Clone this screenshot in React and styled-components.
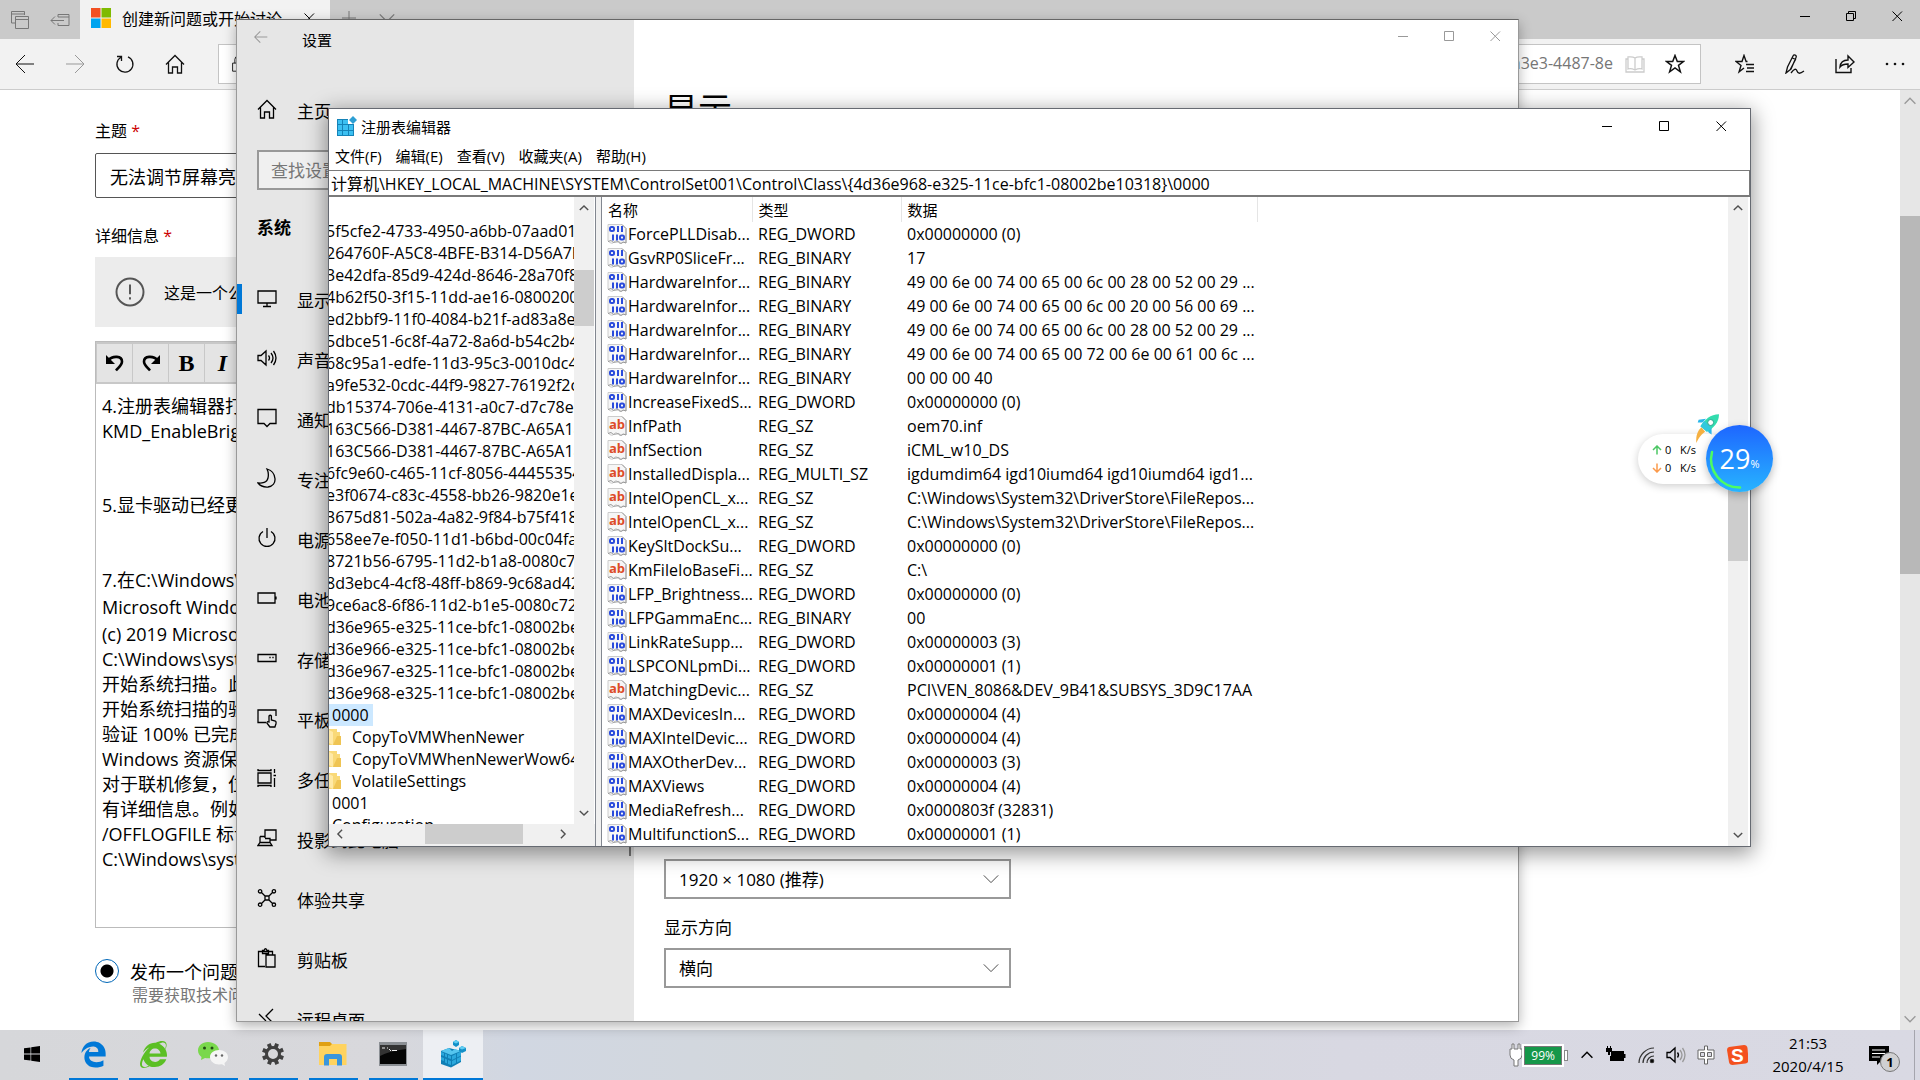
import React, { useState } from 'react'
import styled, { createGlobalStyle, css } from 'styled-components'
import { FaEdgeLegacy, FaInternetExplorer } from 'react-icons/fa'

const GlobalStyle = createGlobalStyle`
  * {
    box-sizing: border-box;
  }

  body {
    margin: 0;
    overflow: hidden;
    font-family: 'Open Sans', 'Noto Sans CJK SC', sans-serif;
    font-size: 16px;
    color: #000;
  }

  button,
  input,
  select {
    font: inherit;
    color: inherit;
    margin: 0;
    padding: 0;
    border: 0;
    background: none;
  }

  svg {
    display: block;
    flex: none;
  }
`

/* ---------- data ---------- */

const values = [
  ['ForcePLLDisab...', 'REG_DWORD', '0x00000000 (0)'],
  ['GsvRP0SliceFr...', 'REG_BINARY', '17'],
  ['HardwareInfor...', 'REG_BINARY', '49 00 6e 00 74 00 65 00 6c 00 28 00 52 00 29 ...'],
  ['HardwareInfor...', 'REG_BINARY', '49 00 6e 00 74 00 65 00 6c 00 20 00 56 00 69 ...'],
  ['HardwareInfor...', 'REG_BINARY', '49 00 6e 00 74 00 65 00 6c 00 28 00 52 00 29 ...'],
  ['HardwareInfor...', 'REG_BINARY', '49 00 6e 00 74 00 65 00 72 00 6e 00 61 00 6c ...'],
  ['HardwareInfor...', 'REG_BINARY', '00 00 00 40'],
  ['IncreaseFixedS...', 'REG_DWORD', '0x00000000 (0)'],
  ['InfPath', 'REG_SZ', 'oem70.inf'],
  ['InfSection', 'REG_SZ', 'iCML_w10_DS'],
  ['InstalledDispla...', 'REG_MULTI_SZ', 'igdumdim64 igd10iumd64 igd10iumd64 igd1...'],
  ['IntelOpenCL_x...', 'REG_SZ', 'C:\\Windows\\System32\\DriverStore\\FileRepos...'],
  ['IntelOpenCL_x...', 'REG_SZ', 'C:\\Windows\\System32\\DriverStore\\FileRepos...'],
  ['KeySltDockSu...', 'REG_DWORD', '0x00000000 (0)'],
  ['KmFileIoBaseFi...', 'REG_SZ', 'C:\\'],
  ['LFP_Brightness...', 'REG_DWORD', '0x00000000 (0)'],
  ['LFPGammaEnc...', 'REG_BINARY', '00'],
  ['LinkRateSupp...', 'REG_DWORD', '0x00000003 (3)'],
  ['LSPCONLpmDi...', 'REG_DWORD', '0x00000001 (1)'],
  ['MatchingDevic...', 'REG_SZ', 'PCI\\VEN_8086&DEV_9B41&SUBSYS_3D9C17AA'],
  ['MAXDevicesIn...', 'REG_DWORD', '0x00000004 (4)'],
  ['MAXIntelDevic...', 'REG_DWORD', '0x00000004 (4)'],
  ['MAXOtherDev...', 'REG_DWORD', '0x00000003 (3)'],
  ['MAXViews', 'REG_DWORD', '0x00000004 (4)'],
  ['MediaRefresh...', 'REG_DWORD', '0x0000803f (32831)'],
  ['MultifunctionS...', 'REG_DWORD', '0x00000001 (1)'],
]

const classKeys = [
  '5f5cfe2-4733-4950-a6bb-07aad01a',
  '264760F-A5C8-4BFE-B314-D56A7B',
  '3e42dfa-85d9-424d-8646-28a70f86',
  '4b62f50-3f15-11dd-ae16-0800200c',
  'ed2bbf9-11f0-4084-b21f-ad83a8e6',
  '5dbce51-6c8f-4a72-8a6d-b54c2b4f',
  '68c95a1-edfe-11d3-95c3-0010dc40',
  'a9fe532-0cdc-44f9-9827-76192f2c',
  'db15374-706e-4131-a0c7-d7c78eb0',
  '163C566-D381-4467-87BC-A65A18',
  '163C566-D381-4467-87BC-A65A18',
  '6fc9e60-c465-11cf-8056-44455354',
  'e3f0674-c83c-4558-bb26-9820e1eb',
  '3675d81-502a-4a82-9f84-b75f418c',
  '658ee7e-f050-11d1-b6bd-00c04fa3',
  '8721b56-6795-11d2-b1a8-0080c72e',
  '8d3ebc4-4cf8-48ff-b869-9c68ad42',
  '9ce6ac8-6f86-11d2-b1e5-0080c72e',
  'd36e965-e325-11ce-bfc1-08002be',
  'd36e966-e325-11ce-bfc1-08002be',
  'd36e967-e325-11ce-bfc1-08002be',
  'd36e968-e325-11ce-bfc1-08002be',
]

const subKeys = ['CopyToVMWhenNewer', 'CopyToVMWhenNewerWow64', 'VolatileSettings']

const menus = ['文件(F)', '编辑(E)', '查看(V)', '收藏夹(A)', '帮助(H)']

/* ---------- shared ---------- */

const Ico = ({ size = 20, w = 1, children, ...rest }) => (
  <svg
    width={size}
    height={size}
    viewBox='0 0 20 20'
    fill='none'
    stroke='currentColor'
    strokeWidth={w}
    {...rest}
  >
    {children}
  </svg>
)

const Chevron = ({ dir = 'down', size = 16, w = 1 }) => {
  const d = {
    down: 'M4 7l6 6 6-6',
    up: 'M4 13l6-6 6 6',
    left: 'M13 4l-6 6 6 6',
    right: 'M7 4l6 6-6 6',
  }[dir]
  return (
    <Ico size={size} w={w}>
      <path d={d} />
    </Ico>
  )
}

const CaptionIcon = ({ kind }) => (
  <svg width='11' height='11' viewBox='0 0 11 11' fill='none' stroke='currentColor'>
    {kind === 'min' && <path d='M0 5.500h10' />}
    {kind === 'max' && <path d='M.5.5h9v9h-9z' />}
    {kind === 'restore' && <path d='M.5 2.500h7v7h-7zM2.500 2.500v-2h7v7h-2' />}
    {kind === 'close' && <path d='M.5.5l9.500 9.500M10 .5L.5 10' />}
  </svg>
)

const CaptionBtn = styled.button`
  width: ${(p) => p.$w}px;
  height: 32px;
  display: grid;
  place-items: center;
`

const Captions = styled.div`
  margin-left: auto;
  display: flex;
  color: ${(p) => p.$color || '#000'};
`

const Caption = ({ w, color, mid = 'max' }) => (
  <Captions $color={color}>
    <CaptionBtn $w={w} aria-label='最小化'>
      <CaptionIcon kind='min' />
    </CaptionBtn>
    <CaptionBtn $w={w} aria-label='最大化'>
      <CaptionIcon kind={mid} />
    </CaptionBtn>
    <CaptionBtn $w={w} aria-label='关闭'>
      <CaptionIcon kind='close' />
    </CaptionBtn>
  </Captions>
)

const Bar = styled.div`
  display: flex;
  flex-direction: ${(p) => (p.$row ? 'row' : 'column')};
  flex: none;
  ${(p) => (p.$row ? 'height' : 'width')}: 20px;
  background: ${(p) => p.$track || '#f0f0f0'};
  color: ${(p) => p.$arrow || '#505050'};
`

const BarBtn = styled.button`
  flex: 0 0 22px;
  display: grid;
  place-items: center;
`

const Part = styled.div`
  flex: ${(p) => p.$grow} 1 0;
  background: ${(p) => p.$color || 'transparent'};
`

const ScrollBar = ({ row, parts, thumb = '#cdcdcd', w = 2, size = 14, ...rest }) => (
  <Bar $row={row} {...rest}>
    <BarBtn aria-label={row ? '向左' : '向上'}>
      <Chevron dir={row ? 'left' : 'up'} w={w} size={size} />
    </BarBtn>
    <Part $grow={parts[0]} />
    <Part $grow={parts[1]} $color={thumb} />
    <Part $grow={parts[2]} />
    <BarBtn aria-label={row ? '向右' : '向下'}>
      <Chevron dir={row ? 'right' : 'down'} w={w} size={size} />
    </BarBtn>
  </Bar>
)

/* ---------- browser ---------- */

const Desktop = styled.div`
  height: 100vh;
  position: relative;
  display: flex;
  flex-direction: column;
  overflow: hidden;
  white-space: nowrap;
`

const Browser = styled.main`
  flex: 1;
  min-height: 0;
  display: flex;
  flex-direction: column;
  background: #fff;
`

const TabStrip = styled.div`
  height: 39px;
  display: flex;
  background: #cacaca;
  color: #777;
`

const TabTools = styled.div`
  width: 80px;
  display: flex;
  align-items: center;
  justify-content: space-between;
  padding: 0 10px;
`

const Tab = styled.div`
  width: 250px;
  height: 39px;
  display: flex;
  align-items: center;
  gap: 11px;
  padding: 0 15px 3px 11px;
  background: #f2f2f2;
  color: #000;

  button {
    margin-left: auto;
  }
`

const StripBtn = styled.button`
  width: 38px;
  height: 36px;
  display: grid;
  place-items: center;
`

const NavBar = styled.div`
  height: 51px;
  display: flex;
  align-items: center;
  background: #f2f2f2;
  border-bottom: 1px solid #ccc;
`

const NavBtn = styled.button`
  width: 50px;
  height: 48px;
  display: grid;
  place-items: center;
  color: ${(p) => (p.$off ? '#999' : '#111')};
`

const AddressBox = styled.div`
  flex: 1;
  height: 40px;
  margin: 0 19px 0 18px;
  padding: 0 15px 0 10px;
  display: flex;
  align-items: center;
  gap: 20px;
  background: #fff;
  border: 1px solid #c4c4c4;
  color: #111;

  input {
    flex: 1;
    margin-right: -8px;
    padding-bottom: 2px;
    text-align: right;
    color: #767676;
    outline: none;
  }
`

const Page = styled.div`
  flex: 1;
  min-height: 0;
  display: flex;
  justify-content: space-between;
`

const Form = styled.form`
  width: 60%;
  padding: 30px 0 0 95px;
  overflow: hidden;
`

const FieldLabel = styled.label`
  display: block;
  line-height: 22px;

  span {
    color: #c00;
  }
`

const Subject = styled.input`
  display: block;
  width: 100%;
  height: 45px;
  margin: 11px 0 27px;
  padding: 0 14px;
  border: 1px solid #555;
  border-radius: 2px;
  font-size: 18px;
`

const Notice = styled.div`
  height: 70px;
  margin: 10px 0 14px;
  padding: 0 20px;
  display: flex;
  align-items: center;
  gap: 19px;
  background: #ececec;
`

const Editor = styled.div`
  height: 587px;
  border: 1px solid #bbb;
`

const EditorTools = styled.div`
  display: flex;
  gap: 1px;
  height: 42px;
  padding: 2px 0 2px 1px;
  background: #c8c8c8;
`

const EditorBtn = styled.button`
  width: 35px;
  display: grid;
  place-items: center;
  background: #e4e4e4;
  font: bold 24px 'Liberation Serif', serif;
  font-style: ${(p) => (p.$italic ? 'italic' : 'normal')};
`

const EditorFill = styled.div`
  flex: 1;
  background: #e4e4e4;
`

const EditorText = styled.div`
  padding: 10px 6px;
  font-size: 18px;
  line-height: 25px;
  outline: none;

  p {
    margin: 0;
  }
`

const Gap = styled.div`
  height: ${(p) => p.$h}px;
`

const RadioRow = styled.label`
  display: grid;
  grid-template-columns: 24px 1fr;
  column-gap: 11px;
  align-items: center;
  margin-top: 30px;
  font-size: 18px;

  input {
    appearance: none;
    width: 24px;
    height: 24px;
    border: 1px solid #0067b8;
    border-radius: 50%;
    background: radial-gradient(circle, #000 6px, transparent 7px);
  }

  small {
    grid-column: 2;
    padding-left: 2px;
    font-size: 16px;
    line-height: 22px;
    color: #777;
  }
`

const homePath = 'M1 10.500L10 1.500l9 9M3.500 8.500v10.500h4v-6h5v6h4V8.500'

const Browse = () => {
  const [subject, setSubject] = useState('无法调节屏幕亮度')
  return (
    <Browser>
      <TabStrip>
        <TabTools>
          <Ico>
            <path d='M5 13H1.500V1.500h13V5M1.500 4h13M5.500 6.500h13v12h-13zM5.500 9.500h13' />
          </Ico>
          <Ico>
            <path d='M8 7V4.500h11v11H8V13M8 7h11M14 10.500H1M5 6.500l-4 4 4 4' />
          </Ico>
        </TabTools>
        <Tab>
          <svg width='20' height='20' viewBox='0 0 20 20'>
            <path fill='#f25022' d='M0 0h9.500v9.500H0z' />
            <path fill='#7fba00' d='M10.500 0H20v9.500h-9.500z' />
            <path fill='#00a4ef' d='M0 10.500h9.500V20H0z' />
            <path fill='#ffb900' d='M10.500 10.500H20V20h-9.500z' />
          </svg>
          创建新问题或开始讨论
          <button aria-label='关闭标签页'>
            <CaptionIcon kind='close' />
          </button>
        </Tab>
        <StripBtn aria-label='新建标签页'>
          <Ico>
            <path d='M10 3v14M3 10h14' />
          </Ico>
        </StripBtn>
        <StripBtn aria-label='标签页预览'>
          <Chevron size={24} />
        </StripBtn>
        <Caption w={46} mid='restore' />
      </TabStrip>
      <NavBar>
        <NavBtn aria-label='返回'>
          <Ico>
            <path d='M19 10H1M10 1l-9 9 9 9' />
          </Ico>
        </NavBtn>
        <NavBtn $off aria-label='前进'>
          <Ico>
            <path d='M1 10h18M10 1l9 9-9 9' />
          </Ico>
        </NavBtn>
        <NavBtn aria-label='刷新'>
          <Ico w={1.3}>
            <path d='M6 3.200a8 8 0 1 0 7 -.4M2 2.500h4.500V7' />
          </Ico>
        </NavBtn>
        <NavBtn aria-label='主页'>
          <Ico w={1.3}>
            <path d={homePath} />
          </Ico>
        </NavBtn>
        <AddressBox>
          <Ico size={18}>
            <path d='M4 9h12v9H4zM6.500 9V5a3.500 3.500 0 0 1 7 0v4' />
          </Ico>
          <input aria-label='地址' defaultValue='a3e3-4487-8e' />
          <Ico stroke='#ccc' w={1.3}>
            <path d='M10 4C7 2 4 3 3 3v12c3-1 5 0 7 1 2-1 4-2 7-1V3c-1 0-4-1-7 1zv12M3 5H1v13h18V5h-2' />
          </Ico>
          <Ico w={1.5}>
            <path d='M10 1.500l2.300 6h6.200l-5 3.900 1.900 6.400-5.400-3.900-5.400 3.900 1.900-6.400-5-3.900h6.200z' />
          </Ico>
        </AddressBox>
        <NavBtn aria-label='收藏夹'>
          <Ico w={1.4}>
            <path d='M12.500 7.500h-1.400L9 1.500l-2 6H1l5 3.900-1.900 6.400L9 14M11 10.500h8M12 14h7M11 17.500h8' />
          </Ico>
        </NavBtn>
        <NavBtn aria-label='添加备注'>
          <Ico w={1.3}>
            <path d='M1 19l1.500-6L8 2c1-2 4-1 3 1.500L6 15zM7.500 4l3 1.500L5 16M6 19c3-4 5-5 6-2s3 3 7 0' />
          </Ico>
        </NavBtn>
        <NavBtn aria-label='共享'>
          <Ico w={1.4}>
            <path d='M1 5v13.500h15V14M5 13c.5-5 4-7 8-7V2l6 6-6 5.500V10c-4 0-6 .5-8 3z' />
          </Ico>
        </NavBtn>
        <NavBtn aria-label='更多'>
          <Ico fill='currentColor' stroke='none'>
            <circle cx='2' cy='10' r='1.300' />
            <circle cx='10' cy='10' r='1.300' />
            <circle cx='18' cy='10' r='1.300' />
          </Ico>
        </NavBtn>
      </NavBar>
      <Page>
        <Form>
          <FieldLabel htmlFor='subject'>
            主题 <span>*</span>
          </FieldLabel>
          <Subject id='subject' value={subject} onChange={(e) => setSubject(e.target.value)} />
          <FieldLabel as='div'>
            详细信息 <span>*</span>
          </FieldLabel>
          <Notice>
            <Ico size={30} stroke='#555' w={1.3}>
              <circle cx='10' cy='10' r='9' />
              <path d='M10 5v6.500M10 13.500v1.500' />
            </Ico>
            这是一个公共社区
          </Notice>
          <Editor>
            <EditorTools>
              <EditorBtn type='button' aria-label='撤消'>
                <Ico w={2.6}>
                  <path d='M3 7.500C8 2 17 3 17 8.500c0 3.500-3 5.500-6 9' />
                  <path d='M1 2v9h9z' fill='currentColor' stroke='none' />
                </Ico>
              </EditorBtn>
              <EditorBtn type='button' aria-label='恢复'>
                <Ico w={2.6}>
                  <path d='M17 7.500C12 2 3 3 3 8.500c0 3.500 3 5.500 6 9' />
                  <path d='M19 2v9h-9z' fill='currentColor' stroke='none' />
                </Ico>
              </EditorBtn>
              <EditorBtn type='button'>B</EditorBtn>
              <EditorBtn type='button' $italic>
                I
              </EditorBtn>
              <EditorFill />
            </EditorTools>
            <EditorText role='textbox' aria-label='详细信息' tabIndex={0}>
              <p>4.注册表编辑器打开</p>
              <p>KMD_EnableBrightness</p>
              <Gap $h={49} />
              <p>5.显卡驱动已经更新</p>
              <Gap $h={50} />
              <p>7.在C:\Windows\system32</p>
              <Gap $h={2} />
              <p>Microsoft Windows</p>
              <Gap $h={2} />
              <p>(c) 2019 Microsoft</p>
              <p>C:\Windows\system32</p>
              <p>开始系统扫描。此过程</p>
              <p>开始系统扫描的验证</p>
              <p>验证 100% 已完成</p>
              <p>Windows 资源保护</p>
              <p>对于联机修复，位于</p>
              <p>有详细信息。例如</p>
              <p>/OFFLOGFILE 标记</p>
              <p>C:\Windows\system32</p>
            </EditorText>
          </Editor>
          <RadioRow>
            <input type='radio' name='kind' defaultChecked />
            发布一个问题
            <small>需要获取技术问题</small>
          </RadioRow>
        </Form>
        <ScrollBar parts={[104, 358, 434]} $track='#e6e6e6' $arrow='#999' thumb='#b8b8b8' w={1.5} size={18} />
      </Page>
    </Browser>
  )
}

/* ---------- settings ---------- */

const windowBase = css`
  position: absolute;
  display: flex;
  background: #fff;
`

const SettingsWindow = styled.section`
  ${windowBase}
  left: 236px;
  top: 19px;
  right: 401px;
  bottom: 58px;
  border: 1px solid #999;
  border-top-color: #666;
  box-shadow: 0 4px 12px rgba(0, 0, 0, 0.3);
`

const SettingsNav = styled.nav`
  width: 397px;
  display: flex;
  flex-direction: column;
  overflow: hidden;
  background: #e6e6e6;
  font-size: 17px;
`

const SettingsTitle = styled.header`
  display: flex;
  align-items: center;
  gap: 34px;
  height: 38px;
  padding-left: 17px;
  font-size: 15px;

  button {
    height: 22px;
    padding-bottom: 4px;
    color: #999;
  }
`

const NavItem = styled.a`
  flex: none;
  display: flex;
  align-items: center;
  gap: 20px;
  height: 60px;
  padding-left: 20px;
  background: ${(p) => (p.$on ? 'linear-gradient(#0078d7, #0078d7) no-repeat left center / 5px 30px' : 'none')};
  color: #000;
  text-decoration: none;

  svg {
    margin-bottom: 3px;
  }
`

const HomeItem = styled(NavItem)`
  margin-top: 22px;
`

const Search = styled.input`
  height: 40px;
  margin: 10px 20px 0;
  padding: 0 12px;
  border: 2px solid #999;
  background: #f0f0f0;

  &::placeholder {
    color: #777;
  }
`

const NavGroup = styled.h2`
  margin: 25px 20px 29px;
  font-size: 17px;
  line-height: 25px;
`

const NavList = styled.div`
  flex: 1;
  min-height: 0;
  display: flex;
  overflow: hidden;
`

const NavItems = styled.div`
  flex: 1;
  display: flex;
  flex-direction: column;
`

const NavThumb = styled.div`
  width: 2px;
  height: 78%;
  margin-right: 3px;
  background: #777;
`

const SettingsPane = styled.div`
  flex: 1;
  display: flex;
  flex-direction: column;
  padding: 0 0 33px 30px;
  font-size: 17px;

  h1 {
    margin: 25px 0 auto;
    font-size: 34px;
    line-height: 48px;
    font-weight: 400;
  }

  label {
    margin: 16px 0 8px;
    line-height: 25px;
  }
`

const SelectBox = styled.div`
  display: grid;
  align-items: center;
  width: 347px;
  height: 40px;
  border: 2px solid #999;
  color: #444;

  select,
  svg {
    grid-area: 1 / 1;
  }

  select {
    height: 36px;
    padding: 0 13px;
    appearance: none;
    outline: none;
    color: #000;
  }

  svg {
    justify-self: end;
    margin-right: 6px;
    pointer-events: none;
  }
`

const PaneCaption = styled.div`
  display: flex;
  height: 40px;
`

const navItems = [
  ['显示', 'M1 3h18v12H1zM10 15v3M6 18.500h8'],
  ['声音', 'M1 7.500h3L9 3v14l-5-4.500H1zM11.500 7.500q2 2.500 0 5M14 5q4 5 0 10M16.500 3q5 7 0 14'],
  ['通知和操作', 'M1 1.500h18v14h-6l-3 3-3-3H1z'],
  ['专注助手', 'M10 1c10 3 11 17 1 18-4 .3-8-1.500-10-4 4 .5 9-.5 10-5s0-7-1-9z'],
  ['电源和睡眠', 'M10 0v10M6 3.500a8 8 0 1 0 8 0'],
  ['电池', 'M1 5h17v10H1zM19 8.500v3'],
  ['存储', 'M1 6.500h18v7H1zM13 8.700v1.500M16 8.700v1.500'],
  ['平板电脑', 'M9 14.500H1V2h18v6M12 14V8q1.200-1.500 2.400 0v4l4 1q1 .5.500 3l-1 3h-5l-3-4q0-2 2-1z'],
  ['多任务处理', 'M1 5h13v10H1zM1 1v1.500h13V1M1 19v-1.500h13V19M17.500 1v4M17.500 10v9M16.500 7.500h2.500'],
  ['投影到此电脑', 'M8 10V2h11v10h-6M3 8.500h5M3 8.500v6h10v-4H8M1 17.500h14l-2-3H3z'],
  ['体验共享', 'M8 8h4v4H8zM4.500 4.500L8 8M15.500 4.500L12 8M4.500 15.500L8 12M15.500 15.500L12 12M4.800 3.300a1.700 1.700 0 1 1-3.400 0 1.700 1.700 0 1 1 3.400 0M18.600 3.300a1.700 1.700 0 1 1-3.400 0 1.700 1.700 0 1 1 3.400 0M4.800 16.700a1.700 1.700 0 1 1-3.400 0 1.700 1.700 0 1 1 3.400 0M18.600 16.700a1.700 1.700 0 1 1-3.400 0 1.700 1.700 0 1 1 3.400 0'],
  ['剪贴板', 'M8 18.500H1.500V3.500h14V7M5.500 5.500V2.500H7Q8.500-1 10 2.500h1.500v3zM9 7h9v12H9z'],
  ['远程桌面', 'M16 1l-7 7 7 7M2 6l7 7'],
]

const Settings = () => (
  <SettingsWindow>
    <SettingsNav>
      <SettingsTitle>
        <button aria-label='返回'>
          <Ico size={14} w={1.5}>
            <path d='M19 10H1M9 2l-8 8 8 8' />
          </Ico>
        </button>
        设置
      </SettingsTitle>
      <HomeItem href='#home'>
        <Ico w={1.3}>
          <path d={homePath} />
        </Ico>
        主页
      </HomeItem>
      <Search aria-label='查找设置' placeholder='查找设置' />
      <NavGroup>系统</NavGroup>
      <NavList>
        <NavItems>
          {navItems.map(([name, d], i) => (
            <NavItem key={name} href={`#s${i}`} $on={i === 0}>
              <Ico w={1.3}>
                <path d={d} />
              </Ico>
              {name}
            </NavItem>
          ))}
        </NavItems>
        <NavThumb />
      </NavList>
    </SettingsNav>
    <SettingsPane>
      <PaneCaption>
        <Caption w={46} color='#999' />
      </PaneCaption>
      <h1>显示</h1>
      <SelectBox>
        <select aria-label='显示分辨率'>
          <option>1920 × 1080 (推荐)</option>
        </select>
        <Chevron size={24} w={0.8} />
      </SelectBox>
      <label htmlFor='orient'>显示方向</label>
      <SelectBox>
        <select id='orient'>
          <option>横向</option>
        </select>
        <Chevron size={24} w={0.8} />
      </SelectBox>
    </SettingsPane>
  </SettingsWindow>
)

/* ---------- registry editor ---------- */

const RegWindow = styled.section`
  ${windowBase}
  left: 328px;
  top: 108px;
  right: 169px;
  bottom: 233px;
  flex-direction: column;
  border: 1px solid #666a72;
  box-shadow: 0 5px 20px 2px rgba(0, 0, 0, 0.4);
`

const RegTitle = styled.header`
  display: flex;
  align-items: center;
  gap: 4px;
  height: 34px;
  padding-left: 8px;
  font-size: 15px;
`

const MenuBar = styled.div`
  display: flex;
  gap: 14px;
  height: 27px;
  padding: 0 6px 2px;
  font-size: 15px;
`

const PathInput = styled.input`
  height: 27px;
  padding: 0 3px 0 2px;
  border: 1px solid #7a7a7a;
  border-width: 1px 1px 2px 0;
  outline: none;
`

const RegBody = styled.div`
  flex: 1;
  min-height: 0;
  display: flex;
`

const TreePane = styled.div`
  width: 267px;
  display: flex;
  flex-direction: column;
  border-right: 1px solid #828790;
`

const TreeTop = styled.div`
  flex: 1;
  min-height: 0;
  display: flex;
  padding-right: 1px;
`

const TreeFoot = styled.div`
  display: flex;
  padding: 0 21px 2px 0;
  background: #f0f0f0;

  > div {
    flex: 1;
  }
`

const Tree = styled.ul`
  flex: 1;
  min-width: 0;
  margin: 0;
  padding: 23px 0 0;
  overflow: hidden;
  list-style: none;
  line-height: 22px;
`

const Key = styled.li`
  display: flex;
  align-items: center;
  height: 22px;
  margin-left: ${(p) => p.$indent || 0}px;
  gap: 10px;

  span {
    padding: 0 4px 0 3px;
    background: ${(p) => (p.$on ? '#cce8ff' : 'none')};
  }
`

const Splitter = styled.div`
  width: 6px;
  background: #f0f0f0;
  border-right: 1px solid #828790;
`

const ListPane = styled.div`
  flex: 1;
  min-width: 0;
  display: flex;
  justify-content: space-between;
  overflow: hidden;
  padding-right: 2px;
`

const ValueTable = styled.table`
  width: 656px;
  align-self: flex-start;
  table-layout: fixed;
  border-collapse: collapse;

  th {
    height: 25px;
    padding: 0 0 0 6px;
    text-align: left;
    font-size: 15px;
    line-height: 22px;
    font-weight: 400;
    border-right: 1px solid #e5e5e5;
  }

  td {
    height: 24px;
    padding: 0 0 0 6px;
    line-height: 22px;
  }

  td:first-child {
    padding-left: 5px;
  }
`

const NameCell = styled.div`
  display: flex;
  align-items: center;
  gap: 1px;
`

const ValueIcon = ({ text }) => (
  <svg width='20' height='20' viewBox='0 0 20 20'>
    <path d='M1 .5h14l4 4v14.500q-2-2-4 0t-4-1-4 0-6-1z' fill='#f6f6f6' stroke='#ccc' />
    <path d='M15 .5l4 4v14.500M1 17.500l3-1q2 3 5 1.500t5 1.500l2-1.500 3 1' fill='none' stroke='#999' />
    {text ? (
      <text x='2' y='13' fontSize='13' fontWeight='700' fontFamily='Open Sans' fill='#dd4b28'>
        ab
      </text>
    ) : (
      <g fill='none' stroke='#2a4bdc' strokeWidth='2'>
        <rect x='3' y='3' width='4' height='4' rx='1.500' />
        <path d='M11 2v6M15 2v6M6 10.500v6M10 10.500v6' />
        <rect x='13' y='11.500' width='4' height='4' rx='1.500' />
      </g>
    )}
  </svg>
)

const FolderIcon = () => (
  <svg width='13' height='18' viewBox='0 0 13 18'>
    <path d='M0 1h8v3h3v13H0z' fill='#f9d978' />
    <path d='M0 2l4 2v13l-4-2z' fill='#ffe9a6' />
    <path d='M8 8h4v9H4z' fill='#efc453' />
  </svg>
)

const Registry = () => {
  const [path, setPath] = useState(
    '计算机\\HKEY_LOCAL_MACHINE\\SYSTEM\\ControlSet001\\Control\\Class\\{4d36e968-e325-11ce-bfc1-08002be10318}\\0000'
  )
  return (
    <RegWindow>
      <RegTitle>
        <svg width='20' height='20' viewBox='0 0 20 20'>
          <path d='M0 3h17v17H0z' fill='#1583b8' />
          <path
            d='M1 4h4v4H1zM6 4h5v4H6zM1 9h4v5H1zM6 9h5v5H6zM12 9h4v5h-4zM1 15h4v4H1zM6 15h5v4H6zM12 15h4v4h-4z'
            fill='#3cc0f2'
          />
          <path d='M11 0h9v8h-9z' fill='#fff' />
          <path d='M16 0l4 4-4 4-4-4z' fill='#2d9fd4' />
        </svg>
        注册表编辑器
        <Caption w={57} />
      </RegTitle>
      <MenuBar>
        {menus.map((m) => (
          <button key={m}>{m}</button>
        ))}
      </MenuBar>
      <PathInput aria-label='路径' value={path} onChange={(e) => setPath(e.target.value)} />
      <RegBody>
        <TreePane>
          <TreeTop>
            <Tree>
              {classKeys.map((k, i) => (
                <Key key={i} $indent={-6}>
                  <span>{k}</span>
                </Key>
              ))}
              <Key $on>
                <span>0000</span>
              </Key>
              {subKeys.map((k) => (
                <Key key={k}>
                  <FolderIcon />
                  {k}
                </Key>
              ))}
              <Key>
                <span>0001</span>
              </Key>
              <Key>
                <span>Configuration</span>
              </Key>
            </Tree>
            <ScrollBar parts={[51, 56, 476]} />
          </TreeTop>
          <TreeFoot>
            <ScrollBar row parts={[74, 97, 29]} />
          </TreeFoot>
        </TreePane>
        <Splitter />
        <ListPane>
          <ValueTable>
            <colgroup>
              <col width='150' />
              <col width='149' />
              <col />
            </colgroup>
            <thead>
              <tr>
                <th>名称</th>
                <th>类型</th>
                <th>数据</th>
              </tr>
            </thead>
            <tbody>
              {values.map(([name, type, data], i) => (
                <tr key={i}>
                  <td>
                    <NameCell>
                      <ValueIcon text={type.endsWith('SZ')} />
                      {name}
                    </NameCell>
                  </td>
                  <td>{type}</td>
                  <td>{data}</td>
                </tr>
              ))}
            </tbody>
          </ValueTable>
          <ScrollBar parts={[265, 76, 262]} />
        </ListPane>
      </RegBody>
    </RegWindow>
  )
}

/* ---------- floating speed ball ---------- */

const Widget = styled.aside`
  position: absolute;
  top: 425px;
  right: 147px;
  display: flex;
  align-items: center;
`

const Speeds = styled.div`
  display: grid;
  grid-template-columns: 10px 12px 1fr;
  align-items: center;
  column-gap: 3px;
  width: 96px;
  height: 50px;
  margin-right: -28px;
  padding: 7px 0 7px 14px;
  border-radius: 25px;
  background: #fff;
  box-shadow: 0 2px 8px rgba(0, 0, 0, 0.2);
  font-size: 11px;
  line-height: 18px;
`

const Ball = styled.div`
  position: relative;
  width: 67px;
  height: 67px;
  display: flex;
  align-items: center;
  justify-content: center;
  border-radius: 50%;
  background: linear-gradient(#1e66ff, #27b4ff);
  box-shadow: 0 3px 8px rgba(0, 0, 0, 0.25);
  color: #fff;
  font-size: 27px;

  small {
    padding-top: 10px;
    font-size: 11px;
  }

  svg {
    position: absolute;
    left: 0;
    top: 0;
  }
`

const Rocket = styled.svg`
  position: absolute;
  left: 56px;
  top: -11px;
`

const SpeedBall = () => (
  <Widget>
    <Speeds>
      <Ico size={10} w={3} stroke='#4cc764'>
        <path d='M10 19V2M2 10l8-8 8 8' />
      </Ico>
      <span>0</span>
      <span>K/s</span>
      <Ico size={10} w={3} stroke='#fb9a4b'>
        <path d='M10 1v17M2 10l8 8 8-8' />
      </Ico>
      <span>0</span>
      <span>K/s</span>
    </Speeds>
    <Ball>
      <svg width='67' height='67' viewBox='0 0 67 67' fill='none'>
        <path d='M6 27A28.500 28.500 0 0 0 34 62.500' stroke='#4dfc62' strokeWidth='2.500' strokeLinecap='round' />
      </svg>
      29<small>%</small>
    </Ball>
    <Rocket width='25' height='30' viewBox='0 0 27 32'>
      <path d='M8 14l4 5c-4 3-6 5-9.500 12C2 22 4 18 8 14z' fill='#f5b041' />
      <path d='M9 9H4l1-3 8-1zM19 15v7l-3-2-2-4z' fill='#29b6ea' />
      <path d='M27 0C18 0 11 6 7 13l7 6C21 15 27 9 27 0z' fill='#32dcae' />
      <path d='M7 13l7 6 5-4-8-8z' fill='#30c8dd' />
      <circle cx='18' cy='9' r='3.200' fill='#fff' stroke='#1b9f8a' />
    </Rocket>
  </Widget>
)

/* ---------- taskbar ---------- */

const TaskBar = styled.footer`
  height: 50px;
  display: flex;
  background: linear-gradient(90deg, #d6d7da, #d8d8dc 20%, #d1d7e2 27%, #d3d7da 45%, #d8d8e2 70%, #d9d9e3);
`

const TaskBtn = styled.button`
  width: ${(p) => (p.$idle ? 63 : 60)}px;
  display: grid;
  grid-template-rows: 1fr 2px;
  place-items: center;
  background: ${(p) => (p.$active ? '#edeff3' : 'none')};

  &::after {
    content: '';
    width: ${(p) => (p.$active ? 60 : 49)}px;
    height: 2px;
    background: ${(p) => (p.$idle ? 'none' : '#0078d7')};
  }
`

const Tray = styled.div`
  margin-left: auto;
  display: flex;
  align-items: center;
  gap: 10px;
  padding-right: 5px;
`

const Battery = styled.div`
  display: flex;
  align-items: center;
  gap: 1px;

  span {
    padding: 0 6px;
    border: 1px solid #777;
    outline: 2px solid #fff;
    background: #16974a;
    color: #fff;
    font-size: 12px;
    line-height: 17px;
  }

  i {
    width: 4px;
    height: 11px;
    margin-left: 1px;
    border: 1px solid #888;
    background: #fff;
  }
`

const Clock = styled.time`
  width: 100px;
  text-align: center;
  font-size: 15px;
  line-height: 23px;
`

const NoticeBtn = styled.button`
  position: relative;
  width: 36px;
  height: 34px;

  b {
    position: absolute;
    right: 4px;
    bottom: 0;
    width: 20px;
    border: 1px solid #777;
    border-radius: 50%;
    background: #d0d0d2;
    font-size: 13px;
    line-height: 18px;
  }
`

const ShowDesktop = styled.button`
  align-self: stretch;
  width: 1px;
  background: #a5a5ad;
`

const Gear = () => (
  <svg width='24' height='24' viewBox='0 0 24 24' fill='none' stroke='#404040'>
    <circle cx='12' cy='12' r='6.500' strokeWidth='3' />
    {[22, 67, 112, 157, 202, 247, 292, 337].map((a) => (
      <path key={a} d='M12 1v4' strokeWidth='4' transform={`rotate(${a} 12 12)`} />
    ))}
  </svg>
)

const Task = () => (
  <TaskBar>
    <TaskBtn $idle aria-label='开始'>
      <svg width='16' height='16' viewBox='0 0 16 16'>
        <path d='M0 2.300l6.500-.9v6.200H0zM7.200 1.300L16 0v7.600H7.200zM0 8.400h6.500v6.200L0 13.700zM7.200 8.400H16V16l-8.800-1.300z' />
      </svg>
    </TaskBtn>
    <TaskBtn aria-label='Edge'>
      <FaEdgeLegacy size={27} color='#0078d7' />
    </TaskBtn>
    <TaskBtn aria-label='360'>
      <FaInternetExplorer size={27} color='#5bbf24' />
    </TaskBtn>
    <TaskBtn aria-label='微信'>
      <svg width='30' height='26' viewBox='0 0 30 26'>
        <path d='M10 1C4 1 0 5 0 9.500c0 3 1.500 5 3.500 6.500L3 19l4-2c5 1 14-.5 14-7.500C21 5 16 1 10 1z' fill='#7ad84c' />
        <circle cx='6.500' cy='7' r='1.500' fill='#234d15' />
        <circle cx='14' cy='7' r='1.500' fill='#234d15' />
        <path d='M21 9c-5 0-9 3-9 7s4 7.500 9 7.500l3-.3 3 1.800-.5-3c2-1.500 3.500-3.500 3.500-6 0-4-4-7-9-7z' fill='#f5f5f5' />
        <circle cx='18' cy='14.500' r='1.200' fill='#666' />
        <circle cx='24' cy='14.500' r='1.200' fill='#666' />
      </svg>
    </TaskBtn>
    <TaskBtn aria-label='设置'>
      <Gear />
    </TaskBtn>
    <TaskBtn aria-label='文件资源管理器'>
      <svg width='28' height='24' viewBox='0 0 28 24'>
        <path d='M0 0h11l2 2v3H0z' fill='#e0a012' />
        <path d='M13 2h14.500v21H0V4h11z' fill='#ffd35f' />
        <path d='M5 23.500V15q0-3 3-3h12q3 0 3 3v8.500h-5V17H10v6.500z' fill='#3a96dd' />
      </svg>
    </TaskBtn>
    <TaskBtn aria-label='命令提示符'>
      <svg width='28' height='24' viewBox='0 0 28 24'>
        <path d='M0 0h28v24H0z' fill='#8b8f94' />
        <path d='M1 3h26v19H1z' fill='#050505' />
        <path d='M1 3h26v4Q10 9 1 14z' fill='#333' />
        <path d='M3 6h3M8 6h1M10 7l2 2M13 8.500h5' stroke='#eee' fill='none' />
      </svg>
    </TaskBtn>
    <TaskBtn $active aria-label='注册表编辑器'>
      <svg width='28' height='28' viewBox='0 0 28 28'>
        <path d='M2 11l8-3 12 3v11l-10 5.500L2 24z' fill='#0f7fb5' />
        <path d='M2 11l8-3 3 3 3-2 6 2-10 4z' fill='#55c6ef' />
        <path
          d='M2 12l3 1v3l-3-1zM6 13.500l2 1v3l-2-1zM9 15l3 1v3l-3-1zM2 17l3 1v3l-3-1zM6 18.500l2 1v4l-2-1zM9 20l3 1v4l-3-1zM13 16l4-2v4l-4 2zM18 13.500l4-2v4l-4 2zM13 21l4-2v4l-4 2zM18 18.500l4-2v4l-4 2z'
          fill='#2ba8dc'
        />
        <path d='M14 2l3-2 3 2v3l-3 2-3-2zM20 8l3-2 4 2v3l-4 2-3-2z' fill='#1390c8' />
        <path d='M14 2l3-2 3 2-3 1.500zM20 8l3-2 4 2-4 1.500z' fill='#62cdf2' />
      </svg>
    </TaskBtn>
    <Tray>
      <Battery>
        <svg width='14' height='24' viewBox='0 0 14 24'>
          <path
            d='M3 1h2v5h4V1h2v5h2v6q0 4-4 5v6H5v-6q-4-1-4-5V6h2z'
            fill='#fff'
            stroke='#777'
          />
        </svg>
        <span>99%</span>
        <i />
      </Battery>
      <Chevron dir='up' size={18} w={1.6} />
      <Ico stroke='none' fill='#000'>
        <path d='M5 6h13v3h1.500v4H18v3H4v-5h1zM0 3h1v-2h1v2h2V1h1v2h1v4H4v3H2V7H0z' />
      </Ico>
      <Ico w={1.2} stroke='#333'>
        <path d='M3 18C3 10 10 3 18 3M7 18c0-6 5-11 11-11M11 18c0-4 3-7 7-7' />
        <circle cx='16' cy='16' r='1.700' fill='#000' />
      </Ico>
      <Ico w={1.3}>
        <path d='M1 7.500h3L9 3v14l-5-4.500H1zM11.500 7.500q2 2.500 0 5' />
        <path d='M14 5q4 5 0 10M16.500 3q5 7 0 14' stroke='#999' />
      </Ico>
      <Ico stroke='#666' fill='#fff'>
        <path d='M8.500 1h3v4H18v9h-6.500v5h-3v-5H2V5h6.500zM4.500 7.500v4h4v-4zM11.500 7.500v4h4v-4z' fillRule='evenodd' />
      </Ico>
      <svg width='22' height='20' viewBox='5 0 22 20'>
        <path d='M8 2l15-2q3 0 3.500 3l1 12q0 3-3 3.500l-13 1.500q-3 0-3.500-3L6 5q0-2.500 2-3z' fill='#f4511e' />
        <text x='10' y='17' fontSize='19' fontWeight='700' fontFamily='Liberation Sans' fill='#fff'>
          S
        </text>
      </svg>
      <Clock>
        21:53
        <br />
        2020/4/15
      </Clock>
      <NoticeBtn aria-label='通知'>
        <svg width='22' height='22' viewBox='0 0 22 22'>
          <path d='M1 2h20v15h-8l-4 4v-4H1z' />
          <path d='M4 6h13M4 9.500h13M4 13h8' stroke='#fff' />
        </svg>
        <b>1</b>
      </NoticeBtn>
      <ShowDesktop aria-label='显示桌面' />
    </Tray>
  </TaskBar>
)

const App = () => (
  <Desktop>
    <GlobalStyle />
    <Browse />
    <Settings />
    <Registry />
    <SpeedBall />
    <Task />
  </Desktop>
)

export default App
